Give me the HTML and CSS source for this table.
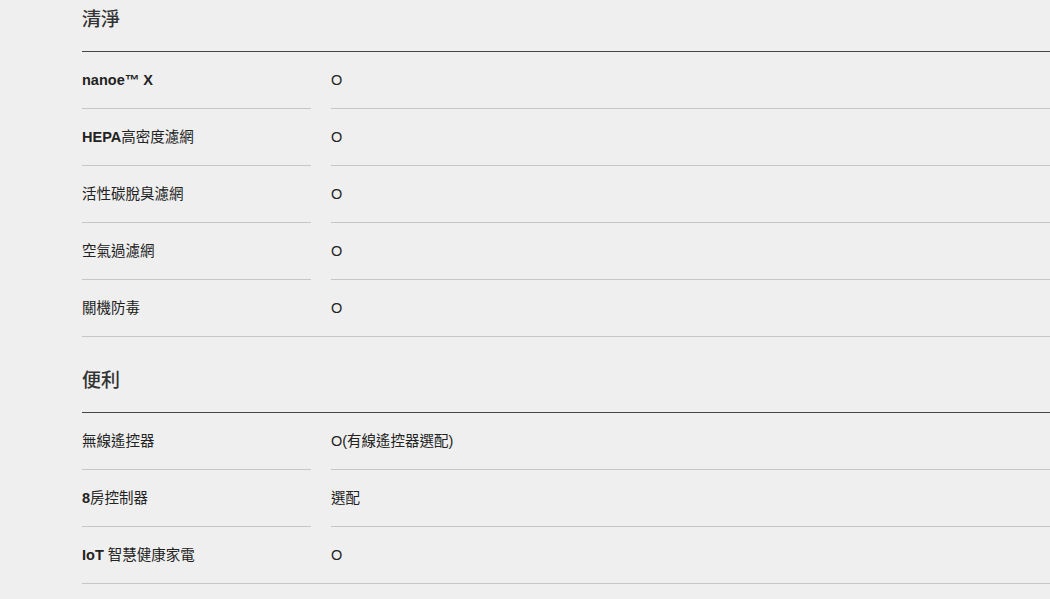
FILE: index.html
```html
<!DOCTYPE html>
<html lang="zh-Hant">
<head>
<meta charset="utf-8">
<title>規格</title>
<link rel="stylesheet" href="styles.css">
</head>
<body>
<main class="specs">
  <section class="spec">
    <h2 class="spec-title">清淨</h2>
    <div class="spec-list">
      <div class="spec-row"><div class="spec-label"><b>nanoe™ X</b></div><div class="spec-value">O</div></div>
      <div class="spec-row"><div class="spec-label"><b>HEPA</b>高密度濾網</div><div class="spec-value">O</div></div>
      <div class="spec-row"><div class="spec-label">活性碳脫臭濾網</div><div class="spec-value">O</div></div>
      <div class="spec-row"><div class="spec-label">空氣過濾網</div><div class="spec-value">O</div></div>
      <div class="spec-row"><div class="spec-label">關機防毒</div><div class="spec-value">O</div></div>
    </div>
  </section>
  <section class="spec">
    <h2 class="spec-title">便利</h2>
    <div class="spec-list">
      <div class="spec-row"><div class="spec-label">無線遙控器</div><div class="spec-value">O(有線遙控器選配)</div></div>
      <div class="spec-row"><div class="spec-label"><b>8</b>房控制器</div><div class="spec-value">選配</div></div>
      <div class="spec-row"><div class="spec-label"><b>IoT</b> 智慧健康家電</div><div class="spec-value">O</div></div>
    </div>
  </section>
</main>
</body>
</html>
```
FILE: styles.css
```css
html, body {
  margin: 0;
  padding: 0;
  background: #efefef;
}
body {
  font-family: "Liberation Sans", "Noto Sans CJK TC", sans-serif;
  color: #222;
  overflow: hidden;
}
.specs {
  padding-left: 82px;
}
.spec + .spec {
  margin-top: 24px;
}
.spec-title {
  margin: 0;
  padding: 8px 0 19px;
  font-size: 19px;
  line-height: 24px;
  font-weight: 500;
  color: #333;
  border-bottom: 1px solid #444;
}
.spec-row {
  display: grid;
  grid-template-columns: 229px 1fr;
  column-gap: 20px;
  font-size: 14.5px;
  line-height: 20px;
}
.spec-label,
.spec-value {
  padding: 18px 0;
  border-bottom: 1px solid #c6c6c6;
}
.spec-label b {
  font-weight: bold;
}
.spec-row:last-child {
  border-bottom: 1px solid #c6c6c6;
}
.spec-row:last-child .spec-label,
.spec-row:last-child .spec-value {
  border-bottom: 0;
}
```
